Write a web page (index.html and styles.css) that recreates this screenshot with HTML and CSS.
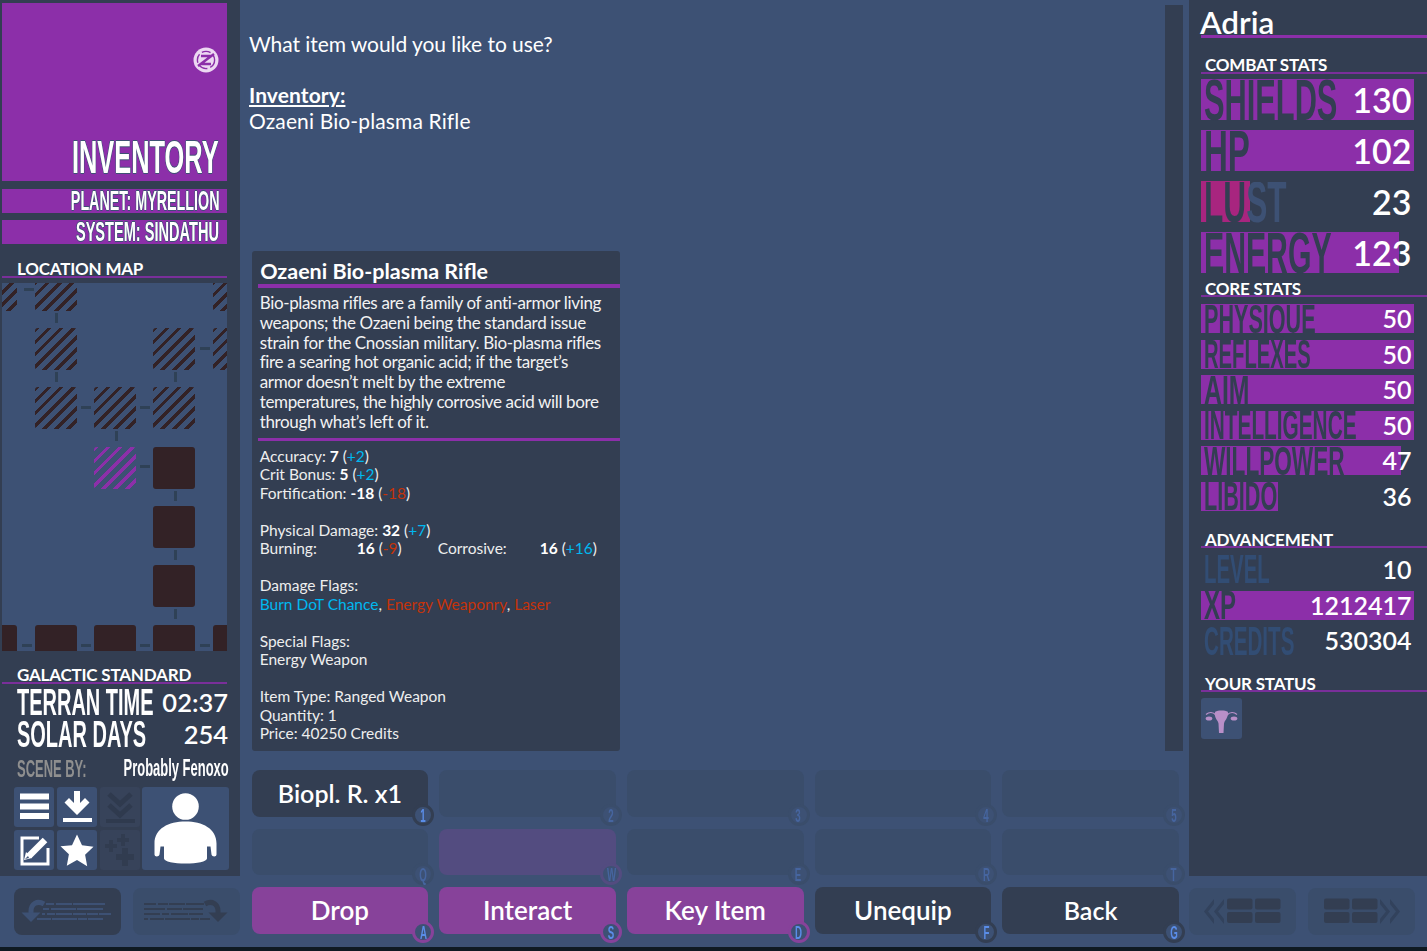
FILE: index.html
```html
<!DOCTYPE html>
<html lang="en">
<head>
<meta charset="utf-8">
<title>Inventory</title>
<link rel="stylesheet" href="styles.css">
</head>
<body>
<div class="app">
  <aside class="left">
    <div class="banner">
      <svg class="logo" viewBox="0 0 26 26"><circle cx="13" cy="13" r="12.5" fill="#ecd8f2"/><circle cx="13" cy="13" r="8.6" fill="none" stroke="#8c2fa9" stroke-width="1.4" stroke-dasharray="9 3"/><path d="M8 9h10L8 17h10M5 19 21 7" fill="none" stroke="#8c2fa9" stroke-width="2.4"/></svg>
      <h1 class="banner-title"><span class="squeeze-r">INVENTORY</span></h1>
    </div>
    <div class="subbar"><span class="squeeze-r sx-planet">PLANET: MYRELLION</span></div>
    <div class="subbar subbar-b"><span class="squeeze-r">SYSTEM: SINDATHU</span></div>
    <h2 class="sec-title sec-map">LOCATION MAP</h2>
    <div class="map">
      <i class="link h" style="left:22px;top:5px"></i>
      <i class="link v" style="left:53px;top:30px"></i>
      <i class="link v" style="left:53px;top:89px"></i>
      <i class="link v" style="left:172px;top:89px"></i>
      <i class="link h" style="left:198px;top:64px"></i>
      <i class="link h" style="left:79px;top:123px"></i>
      <i class="link h" style="left:138px;top:123px"></i>
      <i class="link v" style="left:113px;top:148px"></i>
      <i class="link h" style="left:138px;top:182px"></i>
      <i class="link v" style="left:172px;top:208px"></i>
      <i class="link v" style="left:172px;top:267px"></i>
      <i class="link v" style="left:172px;top:326px"></i>
      <i class="link h" style="left:20px;top:361px"></i>
      <i class="link h" style="left:79px;top:361px"></i>
      <i class="link h" style="left:138px;top:361px"></i>
      <i class="link h" style="left:198px;top:361px"></i>
      <b class="node hatch" style="left:-27px;top:-14px"></b>
      <b class="node hatch" style="left:33px;top:-14px"></b>
      <b class="node hatch" style="left:211px;top:-14px"></b>
      <b class="node hatch" style="left:33px;top:45px"></b>
      <b class="node hatch" style="left:151px;top:45px"></b>
      <b class="node hatch" style="left:211px;top:45px"></b>
      <b class="node hatch" style="left:33px;top:104px"></b>
      <b class="node hatch" style="left:92px;top:104px"></b>
      <b class="node hatch" style="left:151px;top:104px"></b>
      <b class="node here" style="left:92px;top:164px"></b>
      <b class="node" style="left:151px;top:164px"></b>
      <b class="node" style="left:151px;top:223px"></b>
      <b class="node" style="left:151px;top:282px"></b>
      <b class="node" style="left:-27px;top:342px"></b>
      <b class="node" style="left:33px;top:342px"></b>
      <b class="node" style="left:92px;top:342px"></b>
      <b class="node" style="left:151px;top:342px"></b>
      <b class="node" style="left:211px;top:342px"></b>
    </div>
    <h2 class="sec-title sec-time">GALACTIC STANDARD</h2>
    <div class="time-row"><span class="time-label"><span class="squeeze">TERRAN TIME</span></span><span class="time-val">02:37</span></div>
    <div class="time-row"><span class="time-label"><span class="squeeze">SOLAR DAYS</span></span><span class="time-val">254</span></div>
    <div class="scene"><span class="scene-by"><span class="squeeze">SCENE BY:</span></span><span class="scene-name"><span class="squeeze-r">Probably Fenoxo</span></span></div>
    <div class="tools">
      <div class="tool t-menu"><svg viewBox="0 0 40 40"><path fill="#fff" d="M6 6.500h29v6H6zM6 16.500h29v6H6zM6 26h29v6H6z"/></svg></div>
      <div class="tool t-save"><svg viewBox="0 0 40 40"><path fill="#fff" d="M17 4h6v12l5-5 4.500 4.500L20 28 7.500 15.500 12 11l5 5zM6 31h29v4H6z"/></svg></div>
      <div class="tool t-load off"><svg viewBox="0 0 40 40"><path fill="none" stroke="#2f3a4e" stroke-width="5" d="M9 7l11 10L31 7M9 18l11 10 11-10"/><path fill="#2f3a4e" d="M6 32h29v4H6z"/></svg></div>
      <div class="tool t-edit"><svg viewBox="0 0 40 40"><path fill="none" stroke="#fff" stroke-width="3" d="M25 8H8v26h26V18"/><path fill="none" stroke="#fff" stroke-width="6.500" d="M15 26 31 10"/><path fill="#fff" d="M10 30l2-8 6 6z"/><path fill="#3d5174" d="M11 29l3-3 1 2z"/></svg></div>
      <div class="tool t-star"><svg viewBox="0 0 40 40"><path fill="#fff" d="M20 4.500l5 10.700 11.500 1.500-8.400 8 2.100 11.500L20 30l-10.200 5.700 2.100-11.500-8.400-8L15 15.200z"/></svg></div>
      <div class="tool t-perks off"><svg viewBox="0 0 40 40"><path fill="#313c50" d="M21 4h4v4h4v4h-4v4h-4v-4h-4V8h4zM9 10h4v4h4v4h-4v4H9v-4H5v-4h4zM22 18h6v6h6v6h-6v6h-6v-6h-6v-6h6z"/></svg></div>
      <div class="tool t-person"><svg viewBox="0 0 86 83"><circle cx="43" cy="19.500" r="13.300" fill="#fff"/><path fill="#fff" d="M43 34.500c-17 0-31 7-31 22v11c0 2.500 4.500 2.500 5 0l1-8h3.500v12c0 3 10 5 21.500 5s21.500-2 21.500-5v-12H68l1 8c.5 2.500 5 2.500 5 0v-11c0-15-14-22-31-22z"/></svg></div>
    </div>
  </aside>

  <main class="center">
    <div class="upper">
      <div class="reading">
        <p class="line q">What item would you like to use?</p>
        <p class="line inv"><u>Inventory:</u></p>
        <p class="line oz">Ozaeni Bio-plasma Rifle</p>
        <section class="tip">
          <h3 class="tip-title">Ozaeni Bio-plasma Rifle</h3>
          <p class="tip-desc">Bio-plasma rifles are a family of anti-armor living weapons; the Ozaeni being the standard issue strain for the Cnossian military. Bio-plasma rifles fire a searing hot organic acid; if the target’s<br>armor doesn’t melt by the extreme<br>temperatures, the highly corrosive acid will bore through what’s left of it.</p>
          <div class="tip-stats">
            <p>Accuracy: <strong>7</strong> (<span class="up">+2</span>)</p>
            <p>Crit Bonus: <strong>5</strong> (<span class="up">+2</span>)</p>
            <p>Fortification: <strong>-18</strong> (<span class="down">-18</span>)</p>
            <p class="gap">Physical Damage: <strong>32</strong> (<span class="up">+7</span>)</p>
            <p class="dmg"><span class="d1">Burning:</span><span class="d2"><strong>16</strong> (<span class="down">-9</span>)</span><span class="d3">Corrosive:</span><span><strong>16</strong> (<span class="up">+16</span>)</span></p>
            <p class="gap">Damage Flags:</p>
            <p><span class="up">Burn DoT Chance</span>, <span class="down">Energy Weaponry</span>, <span class="down">Laser</span></p>
            <p class="gap">Special Flags:</p>
            <p>Energy Weapon</p>
            <p class="gap">Item Type: Ranged Weapon</p>
            <p>Quantity: 1</p>
            <p>Price: 40250 Credits</p>
          </div>
        </section>
      </div>
      <div class="scrollbar"></div>
    </div>
    <div class="btns">
      <div class="btn dark item">Biopl. R. x1<span class="key"><span class="squeeze-c">1</span></span></div>
      <div class="btn empty"><span class="key"><span class="squeeze-c">2</span></span></div>
      <div class="btn empty"><span class="key"><span class="squeeze-c">3</span></span></div>
      <div class="btn empty"><span class="key"><span class="squeeze-c">4</span></span></div>
      <div class="btn empty"><span class="key"><span class="squeeze-c">5</span></span></div>
      <div class="btn empty"><span class="key"><span class="squeeze-c">Q</span></span></div>
      <div class="btn empty tint"><span class="key"><span class="squeeze-c">W</span></span></div>
      <div class="btn empty"><span class="key"><span class="squeeze-c">E</span></span></div>
      <div class="btn empty"><span class="key"><span class="squeeze-c">R</span></span></div>
      <div class="btn empty"><span class="key"><span class="squeeze-c">T</span></span></div>
      <div class="btn act">Drop<span class="key"><span class="squeeze-c">A</span></span></div>
      <div class="btn act">Interact<span class="key"><span class="squeeze-c">S</span></span></div>
      <div class="btn act">Key Item<span class="key"><span class="squeeze-c">D</span></span></div>
      <div class="btn dark">Unequip<span class="key"><span class="squeeze-c">F</span></span></div>
      <div class="btn dark item">Back<span class="key"><span class="squeeze-c">G</span></span></div>
    </div>
  </main>

  <aside class="right">
    <h2 class="name">Adria</h2>
    <h2 class="sec-title sec-combat">COMBAT STATS</h2>
    <div class="big-stats">
      <div class="stat big"><i class="fill" style="width:100%"></i><span class="lab"><span class="squeeze">SHIELDS</span></span><span class="val">130</span></div>
      <div class="stat big"><i class="fill" style="width:100%"></i><span class="lab"><span class="squeeze sx-hp">HP</span></span><span class="val">102</span></div>
      <div class="stat big"><i class="fill lust" style="width:23%"></i><span class="lab"><span class="squeeze sx-lust lust-text">LUST</span></span><span class="val">23</span></div>
      <div class="stat big"><i class="fill" style="width:93%"></i><span class="lab"><span class="squeeze sx-energy">ENERGY</span></span><span class="val">123</span></div>
    </div>
    <h2 class="sec-title sec-core">CORE STATS</h2>
    <div class="small-stats">
      <div class="stat"><i class="fill" style="width:100%"></i><span class="lab"><span class="squeeze">PHYSIQUE</span></span><span class="val">50</span></div>
      <div class="stat"><i class="fill" style="width:100%"></i><span class="lab"><span class="squeeze sx-reflex">REFLEXES</span></span><span class="val">50</span></div>
      <div class="stat"><i class="fill" style="width:100%"></i><span class="lab"><span class="squeeze sx-aim">AIM</span></span><span class="val">50</span></div>
      <div class="stat"><i class="fill" style="width:100%"></i><span class="lab"><span class="squeeze sx-int">INTELLIGENCE</span></span><span class="val">50</span></div>
      <div class="stat"><i class="fill" style="width:94%"></i><span class="lab"><span class="squeeze sx-will">WILLPOWER</span></span><span class="val">47</span></div>
      <div class="stat"><i class="fill" style="width:36%"></i><span class="lab"><span class="squeeze">LIBIDO</span></span><span class="val">36</span></div>
    </div>
    <h2 class="sec-title sec-adv">ADVANCEMENT</h2>
    <div class="small-stats adv">
      <div class="stat dim"><span class="lab"><span class="squeeze sx-level">LEVEL</span></span><span class="val">10</span></div>
      <div class="stat"><i class="fill" style="width:100%"></i><span class="lab"><span class="squeeze sx-xp">XP</span></span><span class="val">1212417</span></div>
      <div class="stat dim"><span class="lab"><span class="squeeze sx-credits">CREDITS</span></span><span class="val">530304</span></div>
    </div>
    <h2 class="sec-title sec-status">YOUR STATUS</h2>
    <div class="status"><svg viewBox="0 0 41 41"><path fill="#b88fc8" d="M14.500 13.500c2-1.500 10-1.500 12 0 1 1 .5 4-.5 6-1 2.500-2.500 3.500-3 6l-.5 9.500h-4.500l-.5-9.500c-.5-2.500-2-3.500-3-6-1-2-1-5 0-6z"/><path fill="none" stroke="#b88fc8" stroke-width="1.200" d="M15 17c-3-3-7-3-10-.5M26 17c3-3 7-3 10-.5"/><ellipse cx="8" cy="20.500" rx="3.300" ry="2.100" fill="#b88fc8"/><ellipse cx="33" cy="20.500" rx="3.300" ry="2.100" fill="#b88fc8"/></svg></div>
  </aside>

  <nav class="nav nav-l">
    <div class="nav-btn strong"><svg viewBox="0 0 107 47"><g class="txt-lines light"><path d="M32 16h8M42 16h16M59 16h32M29 21h6M37 21h25M63 21h26M28 26h3M33 26h8M42 26h16M59 26h13M73 26h11M85 26h12M23 31h14M38 31h25M64 31h9M74 31h15"/></g><path class="uturn" d="M30 16c-7-4-13 0-13 7v7" stroke="#3d5174"/><path d="M7.500 24.500 17 34l9.500-9.500z" fill="#3d5174"/></svg></div>
    <div class="nav-btn"><svg viewBox="0 0 107 47"><g class="txt-lines dark"><path d="M11 16h12M25 16h10M36 16h16M53 16h18M11 21h21M34 21h15M50 21h20M11 26h16M29 26h7M38 26h17M56 26h14M11 31h4M17 31h14M32 31h25M58 31h8M67 31h10"/></g><path class="uturn" d="M72 16c7-4 13 0 13 7v7" stroke="#333e52"/><path d="M75.500 24.500 85 34l9.500-9.500z" fill="#333e52"/></svg></div>
  </nav>
  <nav class="nav nav-r">
    <div class="nav-btn"><svg viewBox="0 0 107 47"><path class="chev" d="M25 11v5l-6 7.500 6 7.500v5l-10-12.500zM35 11v5l-6 7.500 6 7.500v5l-10-12.500z"/><g class="tile"><rect x="38" y="10.500" width="25.500" height="11" rx="2"/><rect x="66" y="10.500" width="25.500" height="11" rx="2"/><rect x="38" y="24" width="25.500" height="11" rx="2"/><rect x="66" y="24" width="25.500" height="11" rx="2"/></g></svg></div>
    <div class="nav-btn"><svg viewBox="0 0 107 47"><path class="chev" d="M72 11v5l6 7.500-6 7.500v5l10-12.500zM82 11v5l6 7.500-6 7.500v5l10-12.500z"/><g class="tile"><rect x="16" y="10.500" width="25.500" height="11" rx="2"/><rect x="44" y="10.500" width="25.500" height="11" rx="2"/><rect x="16" y="24" width="25.500" height="11" rx="2"/><rect x="44" y="24" width="25.500" height="11" rx="2"/></g></svg></div>
  </nav>
  <div class="foot"></div>
</div>
</body>
</html>
```
FILE: styles.css
```css
* { box-sizing: border-box; margin: 0; padding: 0; }
html, body { height: 100%; }
body { background: #3d5174; color: #fff; font-family: Lato, "Liberation Sans", sans-serif; overflow: hidden; }
.app { display: grid; grid-template-columns: 240px 949px 238px; grid-template-rows: 876px 71px 4px; height: 951px; }

/* condensed display text */
.squeeze, .squeeze-r, .squeeze-c { display: inline-block; font-family: "Liberation Sans Narrow", "Liberation Sans", sans-serif; font-weight: 700; white-space: nowrap; transform: scaleX(.54); }
.squeeze { transform-origin: left center; }
.squeeze-r { transform-origin: right center; }
.squeeze-c { transform-origin: center; }
.sx-planet { transform: scaleX(.53); }
.sx-hp { transform: scaleX(.58); }
.sx-lust { transform: scaleX(.555); }
.sx-energy { transform: scaleX(.53); }
.sx-reflex { transform: scaleX(.505); }
.sx-aim { transform: scaleX(.62); }
.sx-int { transform: scaleX(.52); }
.sx-will { transform: scaleX(.565); }
.sx-level { transform: scaleX(.51); }
.sx-xp { transform: scaleX(.6); }
.sx-credits { transform: scaleX(.515); }

/* left panel */
.left { grid-column: 1; grid-row: 1 / 2; background: #333e52; padding: 3px 13px 0 2px; display: flex; flex-direction: column; }
.banner { height: 178px; background: #8c2fa9; display: flex; flex-direction: column; padding: 44px 8px 0 0; flex: none; }
.logo { width: 26px; height: 26px; align-self: flex-end; }
.banner-title { display: flex; justify-content: flex-end; margin-top: auto; height: 46px; font-size: 47px; line-height: 44px; font-weight: 400; text-shadow: 1px 0 #3d5174, -1px 0 #3d5174, 0 1px #3d5174, 0 -1px #3d5174; }
.subbar { display: flex; justify-content: flex-end; height: 24px; margin-top: 7.500px; background: #8c2fa9; flex: none; padding-right: 8px; font-size: 27px; line-height: 25px; text-shadow: 1px 0 #3d5174, -1px 0 #3d5174, 0 1px #3d5174, 0 -1px #3d5174; }
.subbar-b { margin-top: 7px; }
.sec-title { font-size: 17px; line-height: 16px; font-weight: 700; letter-spacing: -.2px; border-bottom: 2px solid #7a2f9a; padding-left: 15px; flex: none; }
.sec-map { margin-top: 17.500px; height: 17px; }
.map { position: relative; height: 368px; margin-top: 5px; background: #3d5174; overflow: hidden; flex: none; }
.node { position: absolute; width: 42px; height: 42px; border-radius: 3px; background: #332226; }
.node.hatch { background: repeating-linear-gradient(135deg, #332226 0 3.500px, #3d5174 3.500px 8.500px); }
.node.here { background: repeating-linear-gradient(135deg, #8c2fa9 0 3.500px, #3d5174 3.500px 8.500px); }
.link { position: absolute; background: #2f4156; }
.link.h { width: 10px; height: 3px; }
.link.v { width: 3px; height: 10px; }
.sec-time { margin-top: 15px; height: 18px; padding-top: 1px; }
.time-row { display: flex; height: 32px; padding: 0 0 0 15px; margin-top: 2px; align-items: center; justify-content: space-between; }
.time-row + .time-row { margin-top: 0; }
.time-label { font-size: 37px; line-height: 32px; white-space: nowrap; flex: 1; min-width: 0; }
.time-val { font-size: 25.500px; line-height: 32px; font-weight: 600; margin-right: -1px; }
.scene { display: flex; justify-content: space-between; padding-left: 15px; height: 26px; margin-top: 5px; font-size: 24px; line-height: 26px; margin-right: -2px; }
.scene-by { color: #8f8f8f; flex: 1; min-width: 0; }
.scene-name { display: flex; justify-content: flex-end; width: 110px; }
.tools { display: grid; grid-template-columns: 40px 40px 40px 86px; grid-template-rows: 40px 40px; column-gap: 3px; row-gap: 3px; margin: 6px 0 0 12px; }
.tool { background: #3d5174; border-radius: 3px; }
.tool svg { display: block; width: 100%; height: 100%; }
.tool.off { background: #37435a; }
.t-person { grid-column: 4; grid-row: 1 / 3; }
.tools .t-person { margin-left: -1px; }

/* centre */
.center { grid-column: 2; grid-row: 1 / 3; padding: 0 6px 0 9px; display: flex; flex-direction: column; }
.upper { display: flex; height: 751px; flex: none; }
.reading { flex: 1; min-width: 0; padding-top: 31px; }
.line { font-size: 21px; line-height: 26px; }
.q { letter-spacing: -.06px; }
.oz { letter-spacing: .13px; }
.inv { margin-top: 25px; font-weight: 700; letter-spacing: .1px; }
.tip { width: 368px; height: 500px; margin: 117px 0 0 2.700px; background: #333e52; border-radius: 3px; padding-top: 5px; overflow: hidden; }
.tip-title { height: 28px; font-size: 21.500px; line-height: 30px; font-weight: 700; padding-left: 8.500px; }
.tip-desc { margin: 0 0 0 6px; border-top: 4px solid #8c2fa9; border-bottom: 3px solid #8c2fa9; padding: 5px 0 6.400px 2px; font-size: 17px; line-height: 19.800px; letter-spacing: -.345px; color: #f2f2f2; }
.tip-stats { padding: 5.700px 0 0 8px; font-size: 15.500px; line-height: 18.500px; color: #eee; }
.tip-stats strong { font-weight: 700; color: #fff; }
.gap { margin-top: 18.500px; }
.up { color: #00b8f0; }
.down { color: #c4330a; }
.dmg { display: flex; }
.d1 { width: 97px; }
.d2 { width: 81px; }
.d3 { width: 102px; }
.scrollbar { width: 18px; margin-top: 5px; background: #333e52; flex: none; }
.btns { display: grid; grid-template-columns: repeat(5, 176.500px); column-gap: 11.170px; grid-auto-rows: 46.500px; row-gap: 12px; margin: 19px 0 0 2.700px; }
.btn { position: relative; border-radius: 8px; text-align: center; font-size: 26px; line-height: 47px; font-weight: 600; }
.btn.item { font-size: 25px; }
.btn.dark { background: #333e52; }
.btn.act { background: #87429a; }
.btn.empty { background: #3a4d6b; }
.btn.tint { background: #534c80; }
.key { position: absolute; right: -6px; bottom: -9.500px; width: 22px; height: 22px; border-radius: 50%; border: 3px solid #333e52; background: #3d5174; color: #5a8de8; font-size: 18px; line-height: 16px; text-align: center; }
.act .key { border-color: #87429a; }
.empty .key { border-color: #3a4d6b; color: #46659f; }
.tint .key { border-color: #534c80; }

/* right panel */
.right { grid-column: 3; grid-row: 1; background: #333e52; padding: 0 0 0 12px; display: flex; flex-direction: column; }
.name { height: 38px; font-size: 31.500px; line-height: 44px; font-weight: 600; border-bottom: 3px solid #8c2fa9; flex: none; text-indent: -1px; }
.sec-title.sec-combat { height: 36px; padding: 19px 0 0 4px; }
.sec-title.sec-core { height: 24px; padding: 8px 0 0 4px; }
.sec-title.sec-adv { height: 37px; padding: 21px 0 0 4px; }
.sec-title.sec-status { height: 37px; padding: 21px 0 0 4px; }
.big-stats { margin-top: 5px; display: flex; flex-direction: column; gap: 10px; flex: none; }
.small-stats { margin-top: 7px; display: flex; flex-direction: column; gap: 6.600px; flex: none; }
.stat { position: relative; width: 212.500px; height: 29px; display: flex; justify-content: space-between; align-items: center; padding: 0 2px 0 3px; flex: none; }
.stat.big { height: 41px; }
.fill { position: absolute; left: 0; top: 0; bottom: 0; background: #8c2fa9; }
.fill.lust { background: #a8257f; }
.lab { position: relative; font-size: 40px; line-height: 29px; color: #333e52; white-space: nowrap; flex: 1; min-width: 0; }
.big .lab { font-size: 57px; line-height: 41px; }
.lust-text { background: linear-gradient(90deg, #333e52 0 52%, #3d5174 52%); -webkit-background-clip: text; background-clip: text; color: transparent; }
.dim .lab { color: #324d74; }
.val { position: relative; font-size: 25px; line-height: 29px; font-weight: 600; }
.big .val { font-size: 34px; line-height: 41px; }
.status { width: 41px; height: 41px; margin-top: 6px; background: #3d5174; border-radius: 3px; }
.status svg { display: block; width: 41px; height: 41px; }

/* nav */
.nav { grid-row: 2; display: flex; align-items: flex-start; padding-top: 12px; }
.nav-l { grid-column: 1; gap: 12px; padding-left: 14px; }
.nav-r { grid-column: 3; gap: 12px; }
.nav-btn { width: 107px; height: 47px; flex: none; border-radius: 8px; background: #3a4d6b; }
.nav-btn.strong { background: #333e52; }
.nav-btn svg { display: block; width: 107px; height: 47px; }
.txt-lines path { fill: none; stroke-width: 2; }
.txt-lines.light path { stroke: #3d5174; }
.txt-lines.dark path { stroke: #333e52; }
.uturn { fill: none; stroke-width: 5; }
.chev { fill: #32425c; }
.tile rect { fill: #333e52; }
.foot { grid-column: 1 / 4; grid-row: 3; background: #0f1a22; }
```
